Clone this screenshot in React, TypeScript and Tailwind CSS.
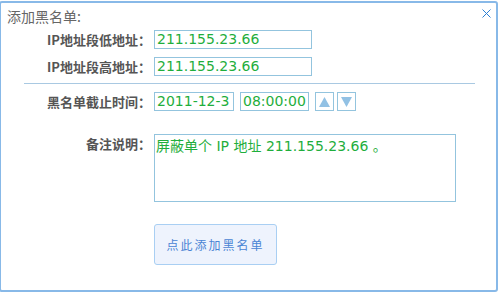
import React from 'react';

const cjk = '"Noto Sans CJK SC", "DejaVu Sans", sans-serif';
const latin = '"DejaVu Sans", "Noto Sans CJK SC", sans-serif';

function Label({ children, top }: { children: React.ReactNode; top?: boolean }) {
  return (
    <div
      className={`w-[153px] shrink-0 text-right text-[13px] font-bold text-[#555] pr-[3px] ${top ? 'pt-[1px] leading-[18px]' : 'leading-[19px]'}`}
      style={{ fontFamily: cjk }}
    >
      {children}
    </div>
  );
}

function Field({ value, width }: { value: string; width: string }) {
  return (
    <div
      className={`${width} h-[19px] border border-[#93c4de] text-[14px] leading-[17px] text-[#1fae3c] pl-[2px] overflow-hidden whitespace-nowrap`}
      style={{ fontFamily: latin }}
    >
      {value}
    </div>
  );
}

function Spin({ up }: { up?: boolean }) {
  return (
    <div className="w-[19px] h-[19px] border border-[#93c4de] flex items-center justify-center">
      <svg width="11" height="10" viewBox="0 0 11 10">
        {up ? <polygon points="5.5,0 11,10 0,10" fill="#92c1e4" /> : <polygon points="0,0 11,0 5.5,10" fill="#92c1e4" />}
      </svg>
    </div>
  );
}

export default function App() {
  return (
    <div className="w-[499px] h-[291px] -ml-px mt-px border-2 border-[#88b9e8] rounded-[3px] bg-white relative overflow-hidden">
      {/* close */}
      <svg className="absolute top-[6px] right-[5px]" width="9" height="9" viewBox="0 0 9 9">
        <path d="M0.5 0.5 L8.5 8.5 M8.5 0.5 L0.5 8.5" stroke="#2a7fd4" strokeWidth="1" />
      </svg>

      <div className="mt-[3px] pl-[6px] text-[14px] leading-[20px] text-[#666]" style={{ fontFamily: cjk }}>
        添加黑名单:
      </div>

      <div className="mt-[4px] flex items-center">
        <Label>IP地址段低地址：</Label>
        <Field value="211.155.23.66" width="w-[158px]" />
      </div>
      <div className="mt-[8px] flex items-center">
        <Label>IP地址段高地址：</Label>
        <Field value="211.155.23.66" width="w-[158px]" />
      </div>

      <div className="mt-[7px] ml-[23px] w-[451px] h-px bg-[#a9c9e2]" />

      <div className="mt-[8px] flex items-center">
        <Label>黑名单截止时间：</Label>
        <Field value="2011-12-3" width="w-[80px]" />
        <div className="w-[6px]" />
        <Field value="08:00:00" width="w-[69px]" />
        <div className="ml-[6px] flex gap-[3px]">
          <Spin up />
          <Spin />
        </div>
      </div>

      <div className="mt-[23px] flex items-start">
        <Label top>备注说明：</Label>
        <div
          className="w-[302px] h-[68px] border border-[#93c4de] text-[14px] leading-[20px] text-[#1fae3c] pl-[1px] pt-[1px]"
          style={{ fontFamily: latin }}
        >
          屏蔽单个 IP 地址 211.155.23.66 。
        </div>
      </div>

      <div className="mt-[22px] pl-[153px]">
        <button
          className="w-[123px] h-[41px] rounded-[3px] border border-[#a9cff3] bg-[#eef3fd] text-[12px] tracking-[2px] text-[#4a84d4]"
          style={{ fontFamily: cjk }}
        >
          点此添加黑名单
        </button>
      </div>
    </div>
  );
}
